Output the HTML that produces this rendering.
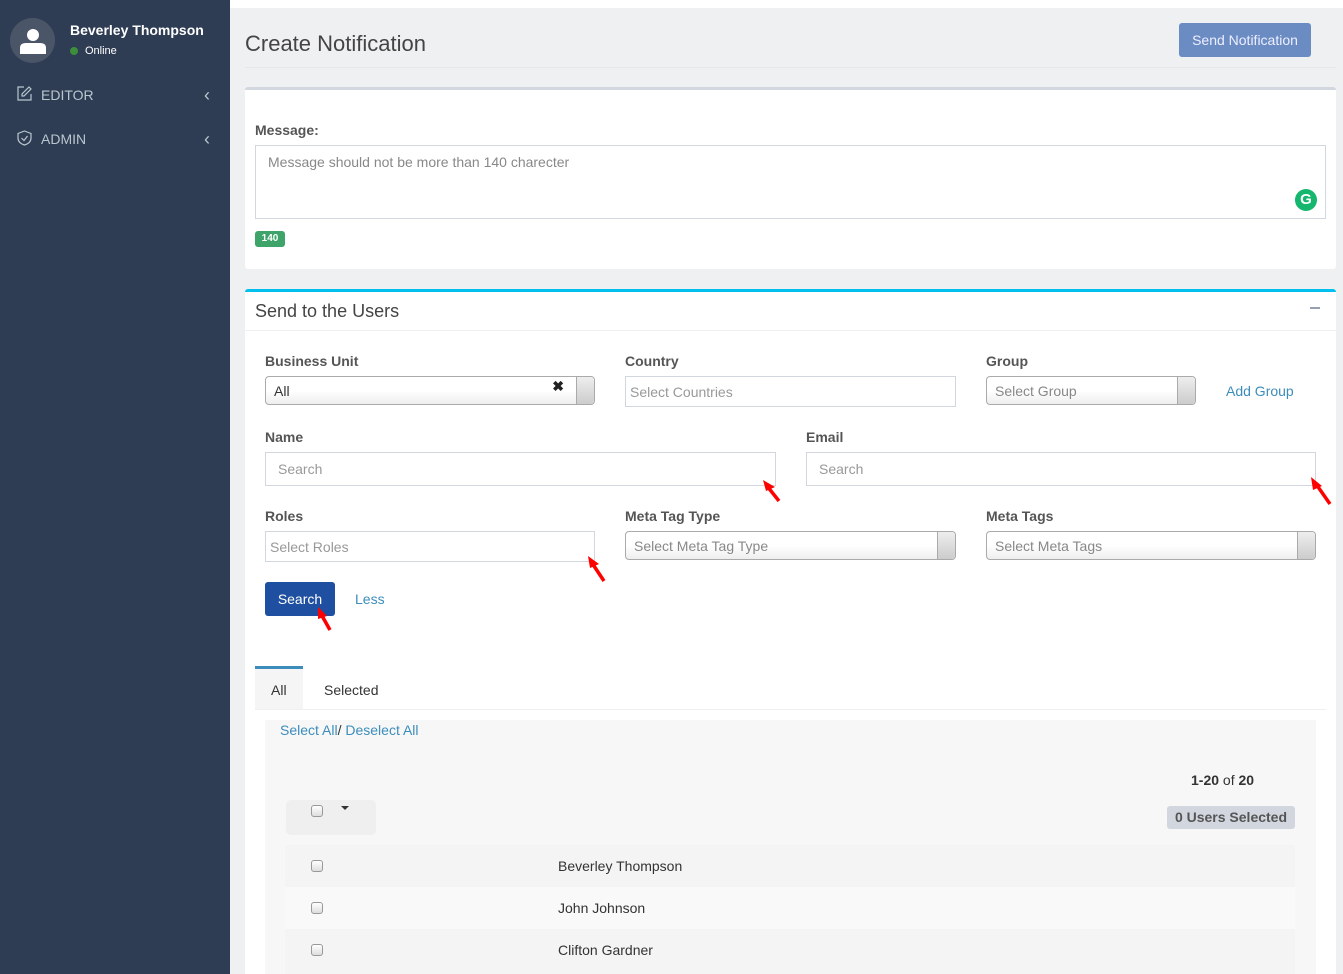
<!DOCTYPE html>
<html><head><meta charset="utf-8"><style>
*{box-sizing:border-box;margin:0;padding:0}
html,body{width:1343px;height:974px;overflow:hidden}
body{font-family:"Liberation Sans",sans-serif;background:#eff0f2;position:relative;color:#333;font-size:14px}
.a{position:absolute}
.sb{left:0;top:0;width:230px;height:974px;background:#2e3c54}
.lbl{font-weight:bold;font-size:14px;color:#555}
.inp{border:1px solid #d2d6de;background:#fff;font-size:14px;color:#999;padding-left:12px;display:flex;align-items:center}
.sel{border:1px solid #aaa;border-radius:4px;background:linear-gradient(#fff 50%,#eee);font-size:14px;color:#888;padding-left:8px;display:flex;align-items:center}
.sel i{position:absolute;right:0;top:0;bottom:0;width:18px;border-left:1px solid #aaa;background:linear-gradient(#eee,#ccc);border-radius:0 4px 4px 0}
.cb{width:12px;height:12px;border:1px solid #999;border-radius:3px;background:linear-gradient(#fff,#ddd)}
.row{left:285px;width:1010px;height:42px}
.chev{color:#b8c7ce;font-size:18px;line-height:18px}
</style></head><body>
<div class="a sb"></div>
<div class="a" style="left:10px;top:18px;width:45px;height:45px;border-radius:50%;background:#4a5568"></div>
<svg class="a" style="left:18px;top:26px" width="30" height="30" viewBox="0 0 30 30"><circle cx="15" cy="9" r="6" fill="#fff"/><path d="M2 28 V22 Q2 17 8 17 H22 Q28 17 28 22 V28Z" fill="#fff"/></svg>
<div class="a" style="left:70px;top:22px;color:#fff;font-weight:bold;font-size:14px">Beverley Thompson</div>
<div class="a" style="left:70px;top:47px;width:8px;height:8px;border-radius:50%;background:#3c8d3c"></div>
<div class="a" style="left:85px;top:45px;color:#fff;font-size:11px">Online</div>
<svg class="a" style="left:17px;top:86px" width="15" height="15" viewBox="0 0 15 15" fill="none" stroke="#b8c7ce" stroke-width="1.2"><path d="M7 1H1V14H14V8"/><path d="M12 1L14 3L7 10H5V8Z"/></svg>
<div class="a" style="left:41px;top:87px;color:#b8c7ce;font-size:14px">EDITOR</div>
<div class="a chev" style="left:204px;top:86px">‹</div>
<svg class="a" style="left:17px;top:130px" width="15" height="16" viewBox="0 0 15 16" fill="none" stroke="#b8c7ce" stroke-width="1.2"><path d="M7.5 1L14 3.5V8Q14 13 7.5 15Q1 13 1 8V3.5Z"/><path d="M4.5 8L7 10.5L10.5 6"/></svg>
<div class="a" style="left:41px;top:131px;color:#b8c7ce;font-size:14px">ADMIN</div>
<div class="a chev" style="left:204px;top:130px">‹</div>

<div class="a" style="left:230px;top:0;width:1113px;height:8px;background:#fff"></div>
<div class="a" style="left:245px;top:31px;font-size:22px;color:#444">Create Notification</div>
<div class="a" style="left:245px;top:67px;width:1091px;height:1px;background:#e6e7ea"></div>
<div class="a" style="left:1179px;top:23px;width:132px;height:34px;background:#6a8cc2;border-radius:3px;color:#eef;font-size:14px;display:flex;align-items:center;justify-content:center">Send Notification</div>

<div class="a" style="left:245px;top:87px;width:1091px;height:182px;background:#fff;border-top:3px solid #d2d6de;border-radius:3px"></div>
<div class="a lbl" style="left:255px;top:122px">Message:</div>
<div class="a" style="left:255px;top:145px;width:1071px;height:74px;border:1px solid #d2d6de;color:#888;padding:8px 12px;font-size:14px">Message should not be more than 140 charecter</div>
<div class="a" style="left:1295px;top:189px;width:22px;height:22px;border-radius:50%;background:#15b66d;color:#fff;font-weight:bold;font-size:15px;text-align:center;line-height:22px">G</div>
<div class="a" style="left:255px;top:231px;width:30px;height:16px;background:#3fa46a;border-radius:3px;color:#fff;font-size:10px;font-weight:bold;text-align:center;line-height:16px">140</div>

<div class="a" style="left:245px;top:289px;width:1091px;height:685px;background:#fff;border-top:3px solid #00c0ef;border-radius:3px 3px 0 0"></div>
<div class="a" style="left:255px;top:301px;font-size:18px;color:#444">Send to the Users</div>
<div class="a" style="left:1310px;top:307px;width:10px;height:2px;background:#97a0b3"></div>
<div class="a" style="left:245px;top:330px;width:1091px;height:1px;background:#f0f0f0"></div>

<div class="a lbl" style="left:265px;top:353px">Business Unit</div>
<div class="a sel" style="left:265px;top:376px;width:330px;height:29px;color:#333">All<span class="a" style="right:30px;top:1px;font-weight:bold;color:#222;font-size:14px">✖</span><i></i></div>
<div class="a lbl" style="left:625px;top:353px">Country</div>
<div class="a inp" style="left:625px;top:376px;width:331px;height:31px;padding-left:4px">Select Countries</div>
<div class="a lbl" style="left:986px;top:353px">Group</div>
<div class="a sel" style="left:986px;top:376px;width:210px;height:29px">Select Group<i></i></div>
<div class="a" style="left:1226px;top:383px;color:#3c8dbc">Add Group</div>

<div class="a lbl" style="left:265px;top:429px">Name</div>
<div class="a inp" style="left:265px;top:452px;width:511px;height:34px">Search</div>
<div class="a lbl" style="left:806px;top:429px">Email</div>
<div class="a inp" style="left:806px;top:452px;width:510px;height:34px">Search</div>

<div class="a lbl" style="left:265px;top:508px">Roles</div>
<div class="a inp" style="left:265px;top:531px;width:330px;height:31px;padding-left:4px">Select Roles</div>
<div class="a lbl" style="left:625px;top:508px">Meta Tag Type</div>
<div class="a sel" style="left:625px;top:531px;width:331px;height:29px">Select Meta Tag Type<i></i></div>
<div class="a lbl" style="left:986px;top:508px">Meta Tags</div>
<div class="a sel" style="left:986px;top:531px;width:330px;height:29px">Select Meta Tags<i></i></div>

<div class="a" style="left:265px;top:582px;width:70px;height:34px;background:#1f4fa0;border-radius:3px;color:#fff;display:flex;align-items:center;justify-content:center">Search</div>
<div class="a" style="left:355px;top:591px;color:#3c8dbc">Less</div>

<div class="a" style="left:255px;top:666px;width:48px;height:44px;background:#f5f5f5;border-top:3px solid #3c8dbc"></div>
<div class="a" style="left:271px;top:682px">All</div>
<div class="a" style="left:324px;top:682px">Selected</div>
<div class="a" style="left:255px;top:709px;width:1071px;height:1px;background:#f0f0f0"></div>

<div class="a" style="left:265px;top:720px;width:1051px;height:254px;background:#f7f7f7"></div>
<div class="a" style="left:280px;top:722px;color:#3c8dbc">Select All<span style="color:#333">/</span> Deselect All</div>
<div class="a" style="left:1191px;top:772px;font-size:14px;color:#333"><b>1-20</b> of <b>20</b></div>
<div class="a" style="left:286px;top:800px;width:90px;height:35px;background:#efefef;border-radius:5px"></div>
<div class="a cb" style="left:311px;top:805px"></div>
<div class="a" style="left:341px;top:806px;width:0;height:0;border-left:4px solid transparent;border-right:4px solid transparent;border-top:4px solid #333"></div>
<div class="a" style="left:1167px;top:806px;width:128px;height:23px;background:#d2d6de;border-radius:3px;color:#555;font-weight:bold;font-size:14px;text-align:center;line-height:23px">0 Users Selected</div>

<div class="a row" style="top:845px;background:#f4f4f4"></div>
<div class="a cb" style="left:311px;top:860px"></div>
<div class="a" style="left:558px;top:858px">Beverley Thompson</div>
<div class="a row" style="top:887px;background:#f9f9f9"></div>
<div class="a cb" style="left:311px;top:902px"></div>
<div class="a" style="left:558px;top:900px">John Johnson</div>
<div class="a row" style="top:929px;height:45px;background:#f4f4f4"></div>
<div class="a cb" style="left:311px;top:944px"></div>
<div class="a" style="left:558px;top:942px">Clifton Gardner</div>

<svg class="a" style="left:0;top:0" width="1343" height="974">
<g stroke="#f00" stroke-width="3.5" fill="#f00">
<line x1="779" y1="501" x2="767" y2="486"/><path d="M763 480L775 487L766 491Z" stroke="none"/>
<line x1="1330" y1="504" x2="1316" y2="484"/><path d="M1311 477L1322 486L1313 490Z" stroke="none"/>
<line x1="604" y1="581" x2="592" y2="563"/><path d="M588 556L599 564L590 568Z" stroke="none"/>
<line x1="330" y1="630" x2="321" y2="614"/><path d="M318 607L327 616L318 619Z" stroke="none"/>
</g></svg>
</body></html>
